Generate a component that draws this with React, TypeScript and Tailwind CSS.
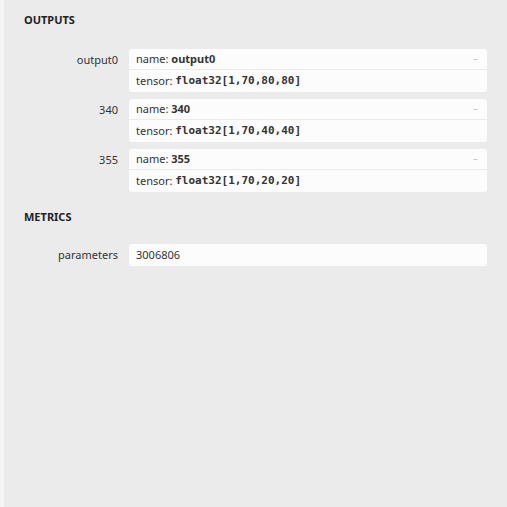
const outputs = [
  { label: "output0", name: "output0", tensor: "float32[1,70,80,80]" },
  { label: "340", name: "340", tensor: "float32[1,70,40,40]" },
  { label: "355", name: "355", tensor: "float32[1,70,20,20]" },
];

const sans = "font-['Noto_Sans','Open_Sans',sans-serif]";
const mono = "font-['DejaVu_Sans_Mono','Liberation_Mono',monospace]";

function Caret() {
  return (
    <svg width="5" height="4" viewBox="0 0 5 4" className="mt-[1px] mr-[2px]">
      <path d="M0.5 1.5 L4.5 1.5" stroke="#c8c8c8" strokeWidth="1" />
    </svg>
  );
}

export default function App() {
  return (
    <div className={`w-[507px] h-[507px] bg-[#f5f5f5] flex ${sans} text-[#333]`}>
      <div className="ml-[4px] flex-1 bg-[#ebebeb] pl-[20px] pr-[20px] pt-[12px]">
        <div className="text-[11px] font-bold leading-[16px] h-[16px] text-[#222]">OUTPUTS</div>

        <div className="mt-[21px] flex flex-col gap-[7px]">
          {outputs.map((o) => (
            <div key={o.label} className="flex">
              <div className="w-[105px] pr-[11px] text-right text-[11px] leading-[21px]">{o.label}</div>
              <div className="flex-1 bg-[#fcfcfc] rounded-[3px] text-[11px]">
                <div className="h-[21px] px-[7px] flex items-center justify-between border-b border-[#ebebeb]">
                  <div>
                    name: <b className="font-bold">{o.name}</b>
                  </div>
                  <Caret />
                </div>
                <div className="h-[22px] px-[7px] flex items-center">
                  tensor:&nbsp;<b className={`${mono} font-bold text-[11px]`}>{o.tensor}</b>
                </div>
              </div>
            </div>
          ))}
        </div>

        <div className="mt-[17px] text-[11px] font-bold leading-[16px] h-[16px] text-[#222]">METRICS</div>

        <div className="mt-[19px] flex">
          <div className="w-[105px] pr-[11px] text-right text-[11px] leading-[22px]">parameters</div>
          <div className="flex-1 h-[22px] bg-[#fcfcfc] rounded-[3px] px-[7px] flex items-center text-[11px]">3006806</div>
        </div>
      </div>
    </div>
  );
}
